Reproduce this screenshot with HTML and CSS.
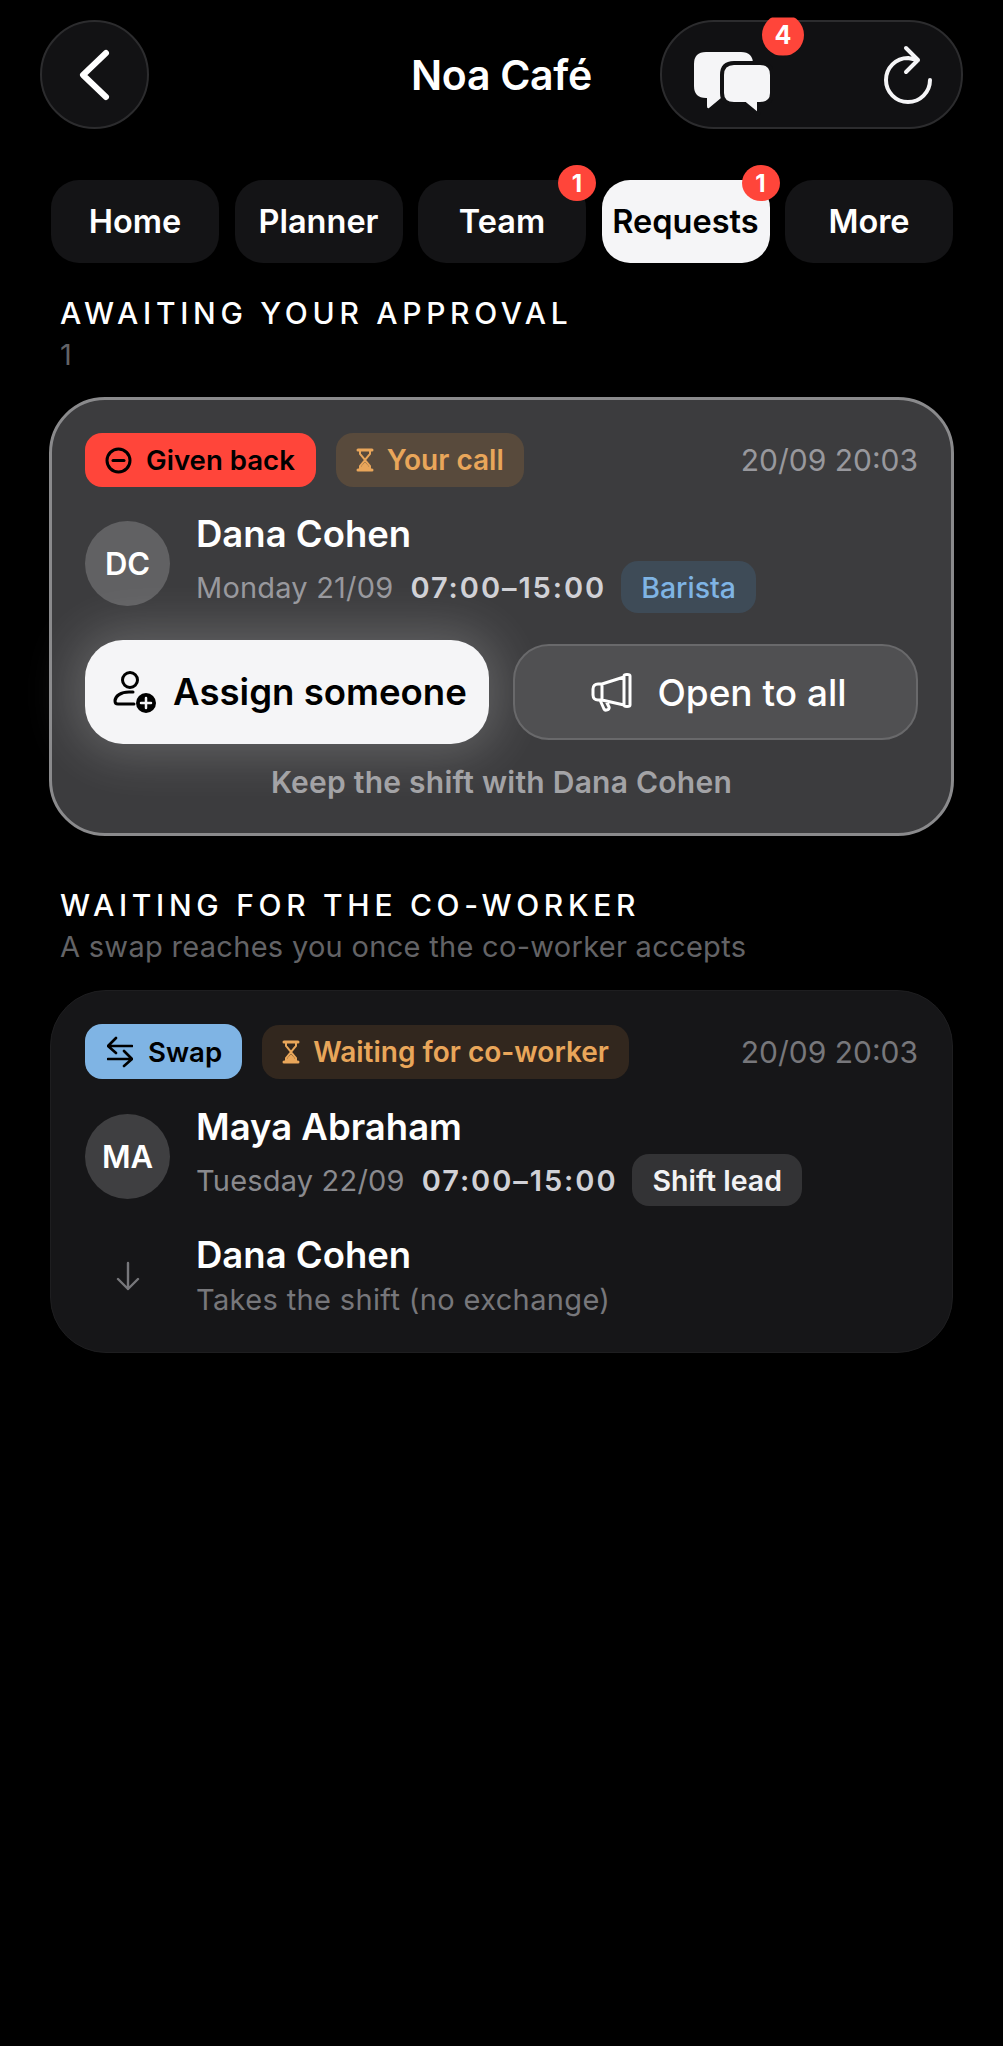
FILE: index.html
```html
<!DOCTYPE html>
<html lang="en">
<head>
    <meta charset="UTF-8">
    <meta name="viewport" content="width=device-width, initial-scale=1.0">
    <title>Noa Café</title>
    <link rel="stylesheet" href="styles.css">
</head>
<body>
    <header class="topbar">
        <button class="round-btn">
            <svg width="40" height="60" viewBox="0 0 40 60"><path d="M31 8 L8 30 L31 52" fill="none" stroke="#fff" stroke-width="6" stroke-linecap="round" stroke-linejoin="round"/></svg>
        </button>
        <h1 class="title">Noa Café</h1>
        <div class="action-pill">
            <div class="chat-icon">
                <svg width="80" height="66" viewBox="0 0 80 66">
                    <path d="M13 2 H48 Q60 2 60 14 V36 Q60 48 48 48 H28 L16 58 Q14 59 14 56 V48 H13 Q1 48 1 36 V14 Q1 2 13 2 Z" fill="#f5f5f7"/>
                    <path d="M41 13 H67 Q79 13 79 25 V43 Q79 54 67 54 H66 V62 Q66 65 63 63 L52 54 H41 Q29 54 29 43 V25 Q29 13 41 13 Z" fill="#f5f5f7" stroke="#111113" stroke-width="4"/>
                </svg>
                <span class="badge badge-chat">4</span>
            </div>
            <svg class="refresh-icon" width="56" height="62" viewBox="0 0 56 62">
                <path d="M49 36 A22 22 0 1 1 27 14 L37 16 M25 4 L37 16 L25 28" fill="none" stroke="#f5f5f7" stroke-width="4" stroke-linecap="round" stroke-linejoin="round"/>
            </svg>
        </div>
    </header>

    <nav class="tabs">
        <div class="tab">Home</div>
        <div class="tab">Planner</div>
        <div class="tab">Team<span class="badge badge-tab">1</span></div>
        <div class="tab tab-active">Requests<span class="badge badge-tab">1</span></div>
        <div class="tab">More</div>
    </nav>

    <main class="content">
        <h2 class="section-title">AWAITING YOUR APPROVAL</h2>
        <p class="section-sub">1</p>

        <section class="card card-active">
            <div class="card-top">
                <span class="chip chip-red">
                    <svg width="27" height="27" viewBox="0 0 27 27"><circle cx="13.5" cy="13.5" r="11.5" fill="none" stroke="#000" stroke-width="3"/><path d="M8 13.5 H19" stroke="#000" stroke-width="3" stroke-linecap="round"/></svg>
                    Given back
                </span>
                <span class="chip chip-amber-light">
                    <svg width="18" height="24" viewBox="0 0 18 24"><path d="M2 2 H16 M2 22 H16" stroke="#e9a65a" stroke-width="3" stroke-linecap="round"/><path d="M4 3 V6 L9 12 L14 6 V3 M4 21 V18 L9 12 L14 18 V21 Z" fill="none" stroke="#e9a65a" stroke-width="2"/><path d="M5 21 V18.5 L9 14 L13 18.5 V21 Z" fill="#e9a65a"/></svg>
                    Your call
                </span>
                <time class="stamp">20/09 20:03</time>
            </div>
            <div class="person">
                <div class="avatar avatar-light">DC</div>
                <div class="person-text">
                    <div class="name">Dana Cohen</div>
                    <div class="meta">
                        <span class="day">Monday 21/09</span>
                        <span class="hours">07:00–15:00</span>
                        <span class="role role-blue">Barista</span>
                    </div>
                </div>
            </div>
            <div class="actions">
                <button class="btn btn-primary">
                    <svg width="46" height="46" viewBox="0 0 46 46">
                        <circle cx="18" cy="11" r="7.5" fill="none" stroke="#000" stroke-width="3"/>
                        <path d="M21 23 H17 C9 23 3 27 3 32 C3 34 4 35 6 35 H22" fill="none" stroke="#000" stroke-width="3" stroke-linecap="round"/>
                        <circle cx="34" cy="34" r="10" fill="#000"/>
                        <path d="M34 29 V39 M29 34 H39" stroke="#f5f5f7" stroke-width="2.5" stroke-linecap="round"/>
                    </svg>
                    Assign someone
                </button>
                <button class="btn btn-secondary">
                    <svg width="42" height="40" viewBox="0 0 42 40">
                        <path d="M33 4 C33 2 39 2 39 4 V33 C39 35 33 35 33 33 Z M33 5 L11 12 H7 C4 12 2 14 2 17 V23 C2 26 4 28 7 28 H11 L33 33 M11 12 V28 M9 28 L13 37 C14 39 19 38 18 35 L15 29" fill="none" stroke="#fff" stroke-width="3" stroke-linejoin="round" stroke-linecap="round"/>
                    </svg>
                    Open to all
                </button>
            </div>
            <div class="keep-link">Keep the shift with Dana Cohen</div>
        </section>

        <h2 class="section-title section-title-second">WAITING FOR THE CO-WORKER</h2>
        <p class="section-sub">A swap reaches you once the co-worker accepts</p>

        <section class="card card-plain">
            <div class="card-top">
                <span class="chip chip-blue">
                    <svg width="26" height="32" viewBox="0 0 26 32"><path d="M25 10 H2 M9 2 L1 10 L9 17 M1 23 H24 M17 15 L25 23 L17 30" fill="none" stroke="#000" stroke-width="2.6" stroke-linecap="round" stroke-linejoin="round"/></svg>
                    Swap
                </span>
                <span class="chip chip-amber-dark">
                    <svg width="18" height="24" viewBox="0 0 18 24"><path d="M2 2 H16 M2 22 H16" stroke="#e9a65a" stroke-width="3" stroke-linecap="round"/><path d="M4 3 V6 L9 12 L14 6 V3 M4 21 V18 L9 12 L14 18 V21 Z" fill="none" stroke="#e9a65a" stroke-width="2"/><path d="M5 21 V18.5 L9 14 L13 18.5 V21 Z" fill="#e9a65a"/></svg>
                    Waiting for co-worker
                </span>
                <time class="stamp stamp-dim">20/09 20:03</time>
            </div>
            <div class="person">
                <div class="avatar avatar-dark">MA</div>
                <div class="person-text">
                    <div class="name">Maya Abraham</div>
                    <div class="meta">
                        <span class="day">Tuesday 22/09</span>
                        <span class="hours">07:00–15:00</span>
                        <span class="role role-gray">Shift lead</span>
                    </div>
                </div>
            </div>
            <div class="person person-next">
                <div class="arrow-cell">
                    <svg width="24" height="30" viewBox="0 0 24 30"><path d="M12 2 V28 M2 18 L12 28 L22 18" fill="none" stroke="#77777b" stroke-width="2.4" stroke-linecap="round" stroke-linejoin="round"/></svg>
                </div>
                <div class="person-text">
                    <div class="name">Dana Cohen</div>
                    <div class="takes">Takes the shift (no exchange)</div>
                </div>
            </div>
        </section>
    </main>
</body>
</html>
```

FILE: styles.css
```css
* {
    box-sizing: border-box;
}
body {
    margin: 0;
    min-height: 2046px;
    background-color: #000;
    color: #fff;
    font-family: Inter, "Liberation Sans", sans-serif;
}
button {
    font-family: inherit;
    cursor: pointer;
}

.topbar {
    display: grid;
    grid-template-columns: 1fr auto 1fr;
    align-items: center;
    padding: 20px 40px 0 40px;
}
.round-btn {
    width: 109px;
    height: 109px;
    padding: 0;
    display: flex;
    align-items: center;
    justify-content: center;
    background-color: #121214;
    border: 2px solid #2c2c2e;
    border-radius: 50%;
}
.title {
    margin: 0;
    font-size: 41px;
    font-weight: 600;
    letter-spacing: -0.3px;
}
.action-pill {
    justify-self: end;
    width: 303px;
    height: 109px;
    padding: 0 24px 0 31px;
    display: flex;
    align-items: center;
    justify-content: space-between;
    background-color: #111113;
    border: 2px solid #2c2c2e;
    border-radius: 54px;
}
.chat-icon {
    position: relative;
    height: 66px;
    margin-top: 16px;
}

.badge {
    position: absolute;
    display: flex;
    align-items: center;
    justify-content: center;
    background-color: #ff453a;
    color: #fff;
    font-weight: 700;
    border-radius: 50%;
}
.badge-chat {
    top: -36px;
    left: 69px;
    width: 42px;
    height: 42px;
    font-size: 25px;
    clip-path: inset(4px 0 0 0);
}
.badge-tab {
    top: -15px;
    right: -10px;
    width: 38px;
    height: 36px;
    font-size: 24px;
}

.tabs {
    display: grid;
    grid-template-columns: repeat(5, 168px);
    column-gap: 15.5px;
    margin-top: 51px;
    padding-left: 51px;
}
.tab {
    position: relative;
    height: 83px;
    display: flex;
    align-items: center;
    justify-content: center;
    background-color: #141416;
    border-radius: 28px;
    font-size: 32.5px;
    font-weight: 600;
}
.tab-active {
    background-color: #f5f5f7;
    color: #000;
}

.content {
    padding: 32px 50px 0;
}
.section-title {
    margin: 0 0 0 10px;
    font-size: 30px;
    line-height: 36px;
    font-weight: 500;
    letter-spacing: 4.7px;
}
.section-title-second {
    margin-top: 51px;
}
.section-sub {
    margin: 6px 0 0 10px;
    font-size: 29px;
    line-height: 36px;
    letter-spacing: 0.3px;
    color: #636366;
}

.card {
    margin-top: 24px;
}
.card-active {
    margin-left: -1px;
    margin-right: -1px;
    padding: 33px 33px 33px;
    background-color: #3c3c3e;
    border: 3px solid #8a8a8c;
    border-radius: 56px;
}
.card-plain {
    margin-top: 25px;
    padding: 33px 34px 34px;
    background-color: #161618;
    border: 1px solid #1e1e20;
    border-radius: 56px;
}

.card-top {
    display: flex;
    align-items: center;
    gap: 20px;
}
.chip {
    height: 54px;
    padding: 0 20px;
    display: flex;
    align-items: center;
    gap: 14px;
    border-radius: 17px;
    font-size: 27.6px;
    font-weight: 600;
}
.chip-red {
    padding-right: 21px;
    background-color: #ff453a;
    color: #000;
}
.chip-amber-light {
    background-color: #584a3c;
    color: #e9a65a;
}
.chip-amber-dark {
    background-color: #32271e;
    color: #e9a65a;
}
.chip-amber-light,
.chip-amber-dark {
    font-size: 28px;
    gap: 13px;
}
.chip-blue {
    height: 55px;
    padding-left: 22px;
    gap: 15px;
    background-color: #7fb4e4;
    color: #000;
}
.stamp {
    margin-left: auto;
    font-size: 30px;
    color: #98989d;
}
.stamp-dim {
    color: #77777b;
}

.person {
    display: flex;
    align-items: center;
    gap: 26px;
    margin-top: 26px;
}
.card-plain .person {
    margin-top: 27px;
}
.card-plain .person-next {
    margin-top: 28px;
}
.avatar {
    flex: none;
    width: 85px;
    height: 85px;
    display: flex;
    align-items: center;
    justify-content: center;
    border-radius: 50%;
    font-size: 31px;
    font-weight: 600;
}
.avatar-light {
    background-color: #616163;
}
.avatar-dark {
    background-color: #3f3f41;
}
.arrow-cell {
    flex: none;
    width: 85px;
    display: flex;
    justify-content: center;
}
.name {
    font-size: 36.5px;
    line-height: 42px;
    font-weight: 560;
}
.meta {
    display: flex;
    align-items: center;
    height: 52px;
    margin-top: 6px;
    font-size: 29px;
}
.day {
    letter-spacing: 0.2px;
    color: #98989d;
}
.card-plain .day {
    color: #8a8a8e;
}
.hours {
    margin-left: 17px;
    font-weight: 600;
    letter-spacing: 1.95px;
    color: #d1d1d6;
}
.role {
    margin-left: 15px;
    height: 52px;
    padding: 0 20px;
    display: flex;
    align-items: center;
    border-radius: 17px;
    font-size: 28.5px;
    font-weight: 500;
}
.role-blue {
    background-color: #3e4b57;
    color: #7fb4e4;
}
.role-gray {
    background-color: #333335;
    color: #f2f2f4;
    font-weight: 600;
}
.takes {
    margin-top: 6px;
    font-size: 29px;
    line-height: 36px;
    letter-spacing: 0.36px;
    color: #77777b;
}

.actions {
    display: flex;
    align-items: center;
    gap: 24px;
    margin-top: 27px;
}
.btn {
    display: flex;
    align-items: center;
    justify-content: center;
    color: #fff;
}
.btn-primary {
    flex: none;
    width: 404px;
    height: 104px;
    padding: 0 0 0 5px;
    gap: 15px;
    background-color: #f5f5f7;
    color: #000;
    font-size: 36.6px;
    font-weight: 600;
    border: none;
    border-radius: 38px;
    box-shadow: 0 0 50px 10px rgba(255, 255, 255, 0.2);
}
.btn-secondary {
    flex: 1;
    height: 96px;
    padding: 0 0 0 7px;
    gap: 24px;
    background-color: #505052;
    font-size: 37px;
    font-weight: 500;
    border: 2px solid #69696b;
    border-radius: 36px;
}
.keep-link {
    margin-top: 20px;
    text-align: center;
    font-size: 30px;
    line-height: 36px;
    letter-spacing: 0.24px;
    font-weight: 600;
    color: #a3a3a6;
}
```
